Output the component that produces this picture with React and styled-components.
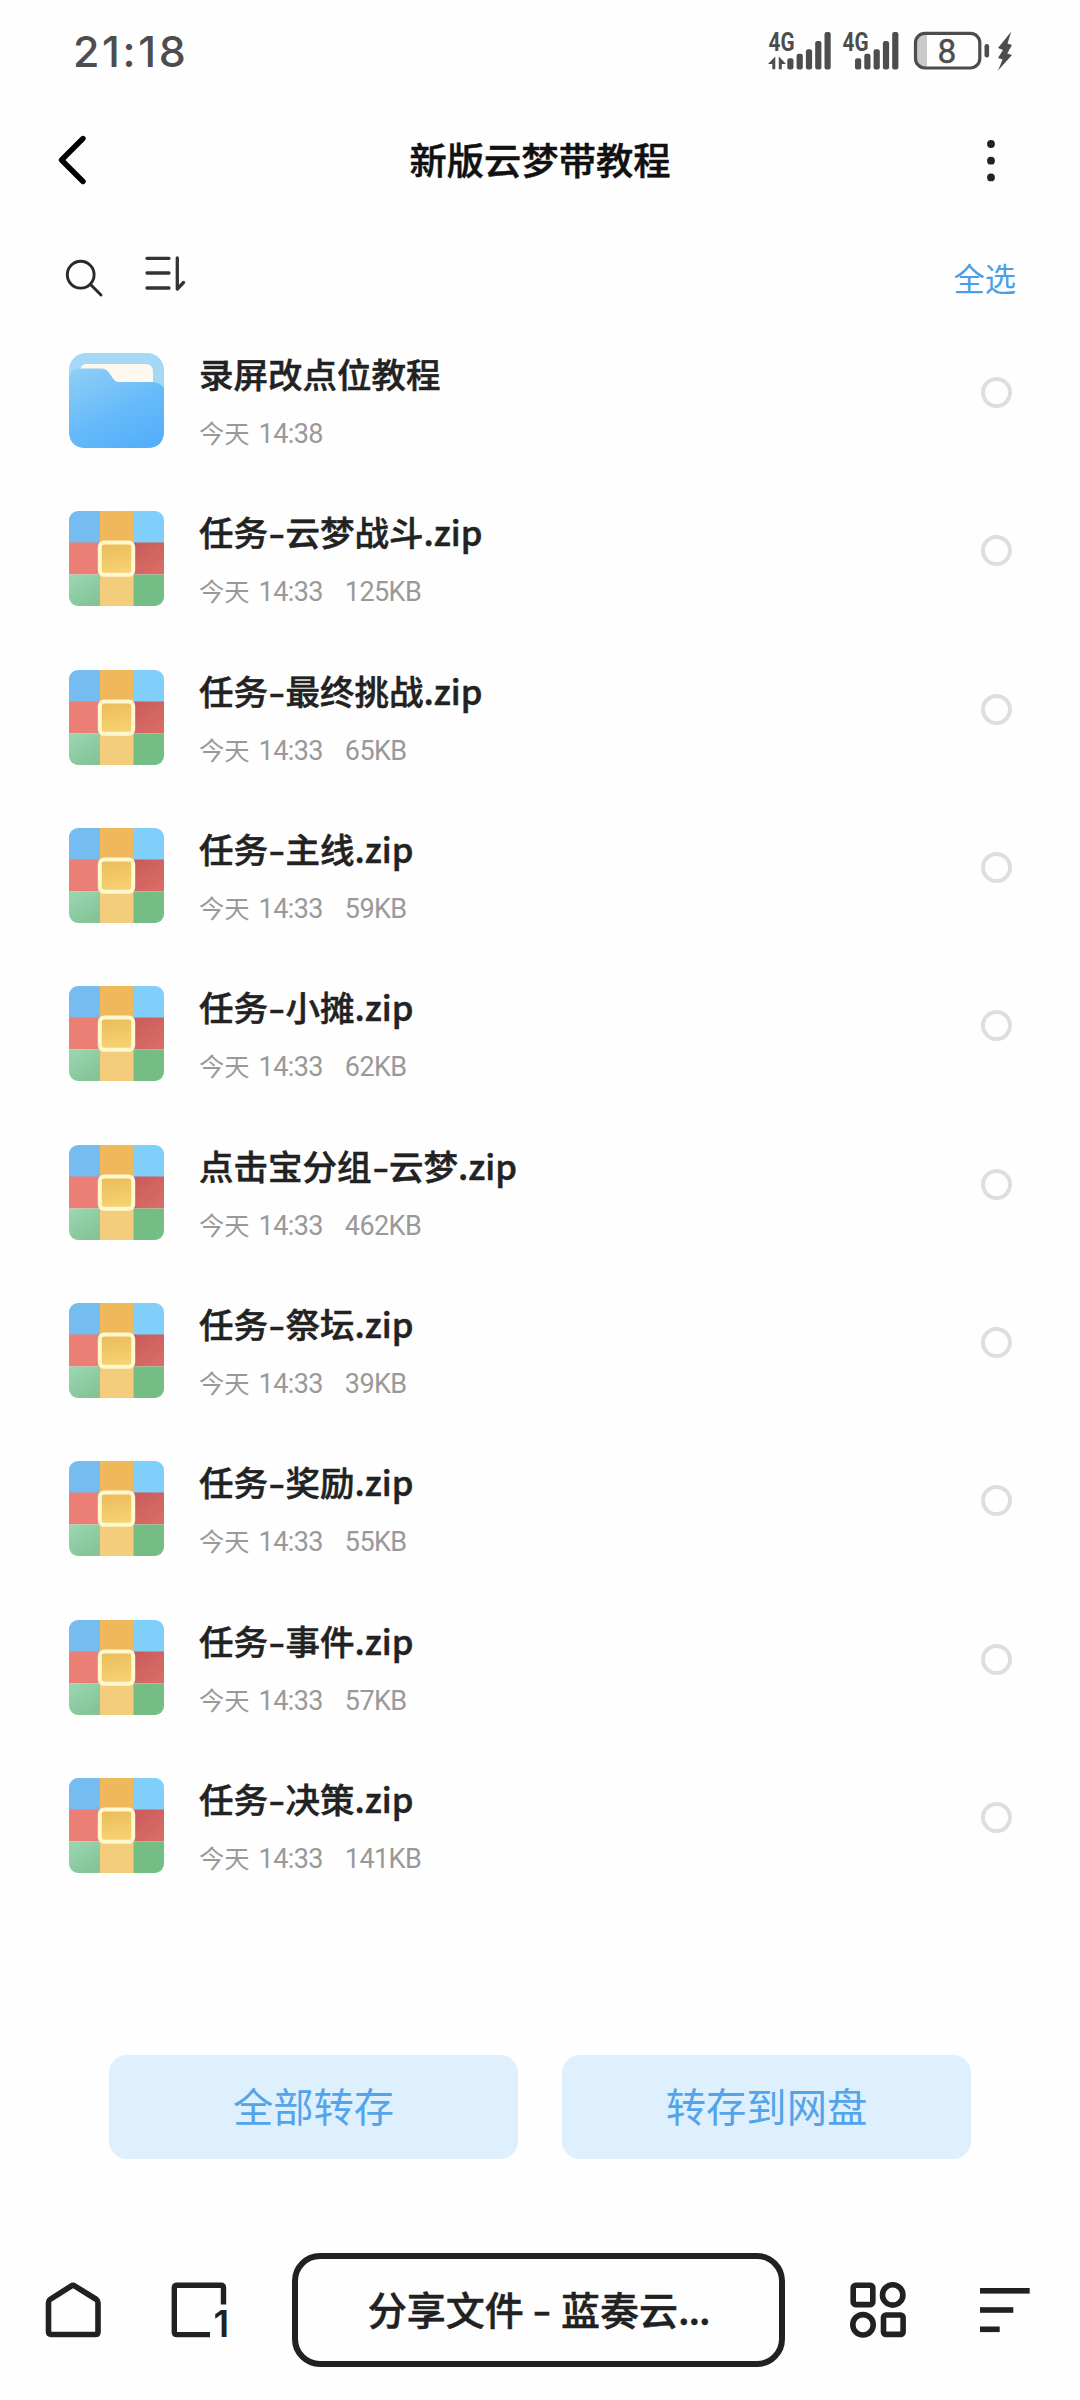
import React from 'react';
import styled, { createGlobalStyle } from 'styled-components';

const GlobalStyle = createGlobalStyle`
  * {
    box-sizing: border-box;
  }

  body {
    margin: 0;
    background: #fefefe;
    font-family: 'Noto Sans CJK SC', 'Noto Sans', sans-serif;
  }

  svg {
    display: block;
    flex: none;
    overflow: visible;
  }
`;

const Page = styled.div`
  display: flex;
  flex-direction: column;
  width: 1080px;
  height: 2400px;
  overflow: hidden;
`;

const StatusBar = styled.div`
  display: flex;
  justify-content: space-between;
  align-items: center;
  height: 102px;
  padding: 0 68px 0 73px;
  color: #4d4d4d;
`;

const Clock = styled.span`
  font-family: Inter, sans-serif;
  font-size: 43px;
  font-weight: 500;
  letter-spacing: 2.6px;
`;

const StatusIcons = styled.div`
  display: flex;
  align-items: center;
`;

const Header = styled.header`
  display: flex;
  justify-content: space-between;
  align-items: center;
  height: 116px;
  padding: 0 79px 0 56px;
`;

const Title = styled.h1`
  margin: 0 0 2px 7px;
  color: #111;
  font-size: 37.3px;
  font-weight: 500;
  line-height: 54px;
  -webkit-text-stroke: 0.5px currentColor;
`;

const Toolbar = styled.div`
  display: flex;
  align-items: center;
  height: 135px;
  padding: 0 64px 16px 64px;
`;

const SortButton = styled.div`
  flex: 1;
  padding: 0 0 7px 40px;
`;

const SelectAll = styled.span`
  color: #4c9fe6;
  font-size: 31.3px;
  line-height: 46px;
`;

const FileList = styled.div`
  height: 1702px;
  padding: 0 68px 0 69px;
`;

const FileRow = styled.div`
  display: flex;
  align-items: flex-start;
  height: 158.35px;
`;

const FileInfo = styled.div`
  flex: 1;
  padding-left: 35px;
`;

const FileName = styled.div`
  color: #222;
  font-size: 34.5px;
  font-weight: 500;
  line-height: 41px;
  -webkit-text-stroke: 0.5px currentColor;
`;

const Hyphen = styled.span`
  display: inline-block;
  width: 0.51em;
  text-align: center;
  transform: scaleX(1.35);
`;

const FileMeta = styled.div`
  display: flex;
  align-items: baseline;
  margin-top: 18px;
  color: #999;
  font-size: 25.3px;
  line-height: 40px;
`;

const Digits = styled.span`
  margin-left: ${(props) => props.$gap}px;
  font-family: Roboto, sans-serif;
  font-size: 27px;
  font-weight: 400;
  letter-spacing: -0.6px;
`;

const Radio = styled.div`
  width: 31px;
  height: 31px;
  margin-top: 24px;
  border: 4px solid #dedede;
  border-radius: 50%;
`;

const Actions = styled.div`
  display: flex;
  gap: 44px;
  height: 198px;
  padding: 0 109px;
`;

const ActionButton = styled.button`
  flex: 1;
  height: 104px;
  padding: 0 0 6px;
  border: none;
  border-radius: 18px;
  background: #def0fe;
  color: #54a4e9;
  font-family: inherit;
  font-size: 40.3px;
`;

const BottomBar = styled.nav`
  display: flex;
  align-items: center;
  height: 114px;
  padding: 0 50px 0 45px;
`;

const PageTitle = styled.div`
  display: flex;
  justify-content: center;
  align-items: center;
  width: 493px;
  height: 114px;
  margin: 0 64px 0 65px;
  padding-bottom: 4px;
  border: 6px solid #212121;
  border-radius: 28px;
  color: #212121;
  font-size: 39px;
  font-weight: 500;
  white-space: pre;
  -webkit-text-stroke: 0.5px currentColor;
`;

const Dots = styled.span`
  letter-spacing: -1.2px;
`;

const Spacer = styled.div`
  width: ${(props) => props.$size}px;
`;

const files = [
  { name: '录屏改点位教程', time: '14:38', folder: true },
  { name: '任务-云梦战斗.zip', time: '14:33', size: '125KB' },
  { name: '任务-最终挑战.zip', time: '14:33', size: '65KB' },
  { name: '任务-主线.zip', time: '14:33', size: '59KB' },
  { name: '任务-小摊.zip', time: '14:33', size: '62KB' },
  { name: '点击宝分组-云梦.zip', time: '14:33', size: '462KB' },
  { name: '任务-祭坛.zip', time: '14:33', size: '39KB' },
  { name: '任务-奖励.zip', time: '14:33', size: '55KB' },
  { name: '任务-事件.zip', time: '14:33', size: '57KB' },
  { name: '任务-决策.zip', time: '14:33', size: '141KB' },
];

const barTops = [27.3, 22.7, 18.3, 10, 1];

function Signal({ width, barsX, arrows }) {
  return (
    <svg width={width} height="40" viewBox={`0 0 ${width} 40`} fill="#4d4d4d">
      <text
        x="0.6"
        y="19.6"
        fontFamily="Roboto, sans-serif"
        fontSize="25"
        fontWeight="700"
        textLength="26"
        lengthAdjust="spacingAndGlyphs"
      >
        4G
      </text>
      {arrows && <path d="M7.3 25.5V38.3H4.3V33H0ZM10.8 25.5L18 33H13.8V38.3H10.8Z" />}
      {barTops.map((top, i) => (
        <rect key={top} x={barsX + i * 9.3} y={top} width="6.2" height={38.4 - top} rx="2.2" />
      ))}
    </svg>
  );
}

function Battery() {
  return (
    <svg width="76" height="40" viewBox="0 0 76 40">
      <path d="M13 3H11A6 6 0 0 0 3 10V30A6 6 0 0 0 11 37H13Z" fill="#c9c9c9" />
      <rect x="1.5" y="2.4" width="64.3" height="34.6" rx="9.5" fill="none" stroke="#4d4d4d" strokeWidth="3.2" />
      <rect x="70.5" y="13" width="4.6" height="13.5" rx="2.2" fill="#4d4d4d" />
      <text
        x="32.8"
        y="31.8"
        textAnchor="middle"
        fontFamily="Roboto, sans-serif"
        fontSize="33.5"
        fill="#4d4d4d"
        stroke="#4d4d4d"
        strokeWidth="0.4"
      >
        8
      </text>
    </svg>
  );
}

function Bolt() {
  return (
    <svg width="15" height="40" viewBox="0 0 15 40" fill="#4d4d4d">
      <path d="M14.3 0.5L1 17L6 19L1 27L5.6 28.500L1 39.500L15 24L10.200 22.500L15 14L10.500 12.500Z" />
    </svg>
  );
}

function FolderIcon() {
  return (
    <svg width="95" height="95" viewBox="0 0 95 95">
      <defs>
        <linearGradient id="folderFront" x1="0.15" y1="0" x2="0.7" y2="1">
          <stop offset="0" stopColor="#8bcdf7" />
          <stop offset="0.55" stopColor="#68bbf9" />
          <stop offset="1" stopColor="#55aff9" />
        </linearGradient>
      </defs>
      <rect width="95" height="95" rx="17" fill="#a5d7f6" />
      <path d="M11 17Q12 11 17 11H76Q84 11 84 19V29H45L34 17Z" fill="#fdf9f1" />
      <path
        d="M0 28Q0 15.5 12 15.5H32Q37 15.5 39.5 19L44 25.5Q46.5 29 50 29H83Q91 29 95 35V78Q95 95 78 95H17Q0 95 0 78Z"
        fill="url(#folderFront)"
      />
    </svg>
  );
}

function ZipIcon() {
  return (
    <svg width="95" height="95" viewBox="0 0 95 95">
      <defs>
        <clipPath id="zipShape">
          <rect width="95" height="95" rx="9" />
        </clipPath>
        <linearGradient id="zipGreen" x1="0" y1="0" x2="0.6" y2="1">
          <stop offset="0" stopColor="#9ad8b2" />
          <stop offset="1" stopColor="#84c497" />
        </linearGradient>
        <linearGradient id="zipRed" x1="0" y1="0" x2="0.7" y2="1">
          <stop offset="0" stopColor="#c85a5b" />
          <stop offset="1" stopColor="#da6c66" />
        </linearGradient>
        <linearGradient id="zipClasp" x1="0" y1="0" x2="0.2" y2="1">
          <stop offset="0" stopColor="#ebba58" />
          <stop offset="1" stopColor="#f6d272" />
        </linearGradient>
      </defs>
      <g clipPath="url(#zipShape)">
        <rect width="31" height="32" fill="#75bdf0" />
        <rect x="64" width="31" height="32" fill="#80cffa" />
        <rect y="31.5" width="31" height="32" fill="#ec7f75" />
        <rect x="64" y="31.5" width="31" height="32" fill="url(#zipRed)" />
        <rect y="63.5" width="31" height="32" fill="url(#zipGreen)" />
        <rect x="64" y="63.5" width="31" height="32" fill="#74bd85" />
        <rect x="31" width="33.5" height="48" fill="#efb85a" />
        <rect x="31" y="48" width="33.5" height="47" fill="#f3cd7c" />
      </g>
      <rect x="30.8" y="31.4" width="33.4" height="32.4" rx="4.5" fill="url(#zipClasp)" stroke="#fff8cf" strokeWidth="4" />
    </svg>
  );
}

function renderName(name) {
  const [head, tail] = name.split('-');
  if (!tail) return name;
  return (
    <>
      {head}
      <Hyphen>-</Hyphen>
      {tail}
    </>
  );
}

function File({ file }) {
  return (
    <FileRow>
      {file.folder ? <FolderIcon /> : <ZipIcon />}
      <FileInfo>
        <FileName>{renderName(file.name)}</FileName>
        <FileMeta>
          <span>今天</span>
          <Digits $gap={9}>{file.time}</Digits>
          {file.size && <Digits $gap={22}>{file.size}</Digits>}
        </FileMeta>
      </FileInfo>
      <Radio />
    </FileRow>
  );
}

function App() {
  return (
    <>
      <GlobalStyle />
      <Page>
        <StatusBar>
          <Clock>21:18</Clock>
          <StatusIcons>
            <Signal width={63} barsX={19.3} arrows />
            <Spacer $size={11} />
            <Signal width={57} barsX={13} />
            <Spacer $size={15} />
            <Battery />
            <Spacer $size={7.5} />
            <Bolt />
          </StatusIcons>
        </StatusBar>

        <Header>
          <svg width="36" height="50" viewBox="0 0 36 50" fill="none" stroke="#000" strokeWidth="5.4" strokeLinecap="round" strokeLinejoin="round">
            <path d="M27 3.5L5.5 25L27 46.5" />
          </svg>
          <Title>新版云梦带教程</Title>
          <svg width="20" height="44" viewBox="0 0 20 44" fill="#222">
            <circle cx="10" cy="6" r="3.9" />
            <circle cx="10" cy="22.7" r="3.9" />
            <circle cx="10" cy="39.4" r="3.9" />
          </svg>
        </Header>

        <Toolbar>
          <svg width="40" height="40" viewBox="0 0 40 40" fill="none" stroke="#2a2a2a" strokeWidth="2.9">
            <circle cx="16.7" cy="16.7" r="13.4" />
            <path d="M26.3 26.3L37 37" strokeLinecap="round" />
          </svg>
          <SortButton>
            <svg width="42" height="38" viewBox="0 0 42 38" fill="none" stroke="#333" strokeWidth="3.3" strokeLinecap="round" strokeLinejoin="round">
              <path d="M3 3.3H25M3 18H25M3 33H25" />
              <path d="M33.3 3V34L39.500 27.5" />
            </svg>
          </SortButton>
          <SelectAll>全选</SelectAll>
        </Toolbar>

        <FileList>
          {files.map((file) => (
            <File key={file.name} file={file} />
          ))}
        </FileList>

        <Actions>
          <ActionButton>全部转存</ActionButton>
          <ActionButton>转存到网盘</ActionButton>
        </Actions>

        <BottomBar>
          <svg width="56" height="56" viewBox="0 0 56 56" fill="none" stroke="#212121" strokeWidth="5.6" strokeLinejoin="round">
            <path d="M3.5 20.5Q3.5 18.5 5 17.5L26.5 3.8Q28 3 29.5 3.8L51.5 17.5Q53 18.5 53 20.5V50Q53 52.5 50.5 52.5H6Q3.5 52.5 3.5 50Z" />
          </svg>
          <Spacer $size={70} />
          <svg width="56" height="56" viewBox="0 0 56 56" fill="none" stroke="#212121" strokeWidth="5.4">
            <path d="M52.5 22.5V6Q52.5 3.2 50 3.2H6Q3.3 3.2 3.3 6V50Q3.3 52.6 6 52.6H39" />
            <text x="42.5" y="55.3" fontFamily="Inter, sans-serif" fontSize="37" fontWeight="600" fill="#212121" stroke="none">
              1
            </text>
          </svg>
          <PageTitle>
            分享文件 <Hyphen>-</Hyphen> 蓝奏云<Dots>...</Dots>
          </PageTitle>
          <svg width="58" height="56" viewBox="0 0 58 56" fill="none" stroke="#212121" strokeWidth="5.6">
            <rect x="4.2" y="3.2" width="19.6" height="19.4" rx="2.5" />
            <circle cx="43.7" cy="12.9" r="10.2" />
            <circle cx="14" cy="42.8" r="10.2" />
            <rect x="34.5" y="33" width="19.6" height="19.4" rx="2.5" />
          </svg>
          <Spacer $size={73} />
          <svg width="50" height="46" viewBox="0 0 50 46" fill="#212121">
            <rect y="1" width="49.7" height="5.6" />
            <rect y="20.2" width="33.3" height="5.6" />
            <rect y="39.5" width="19.7" height="5.6" />
          </svg>
        </BottomBar>
      </Page>
    </>
  );
}

export default App;
